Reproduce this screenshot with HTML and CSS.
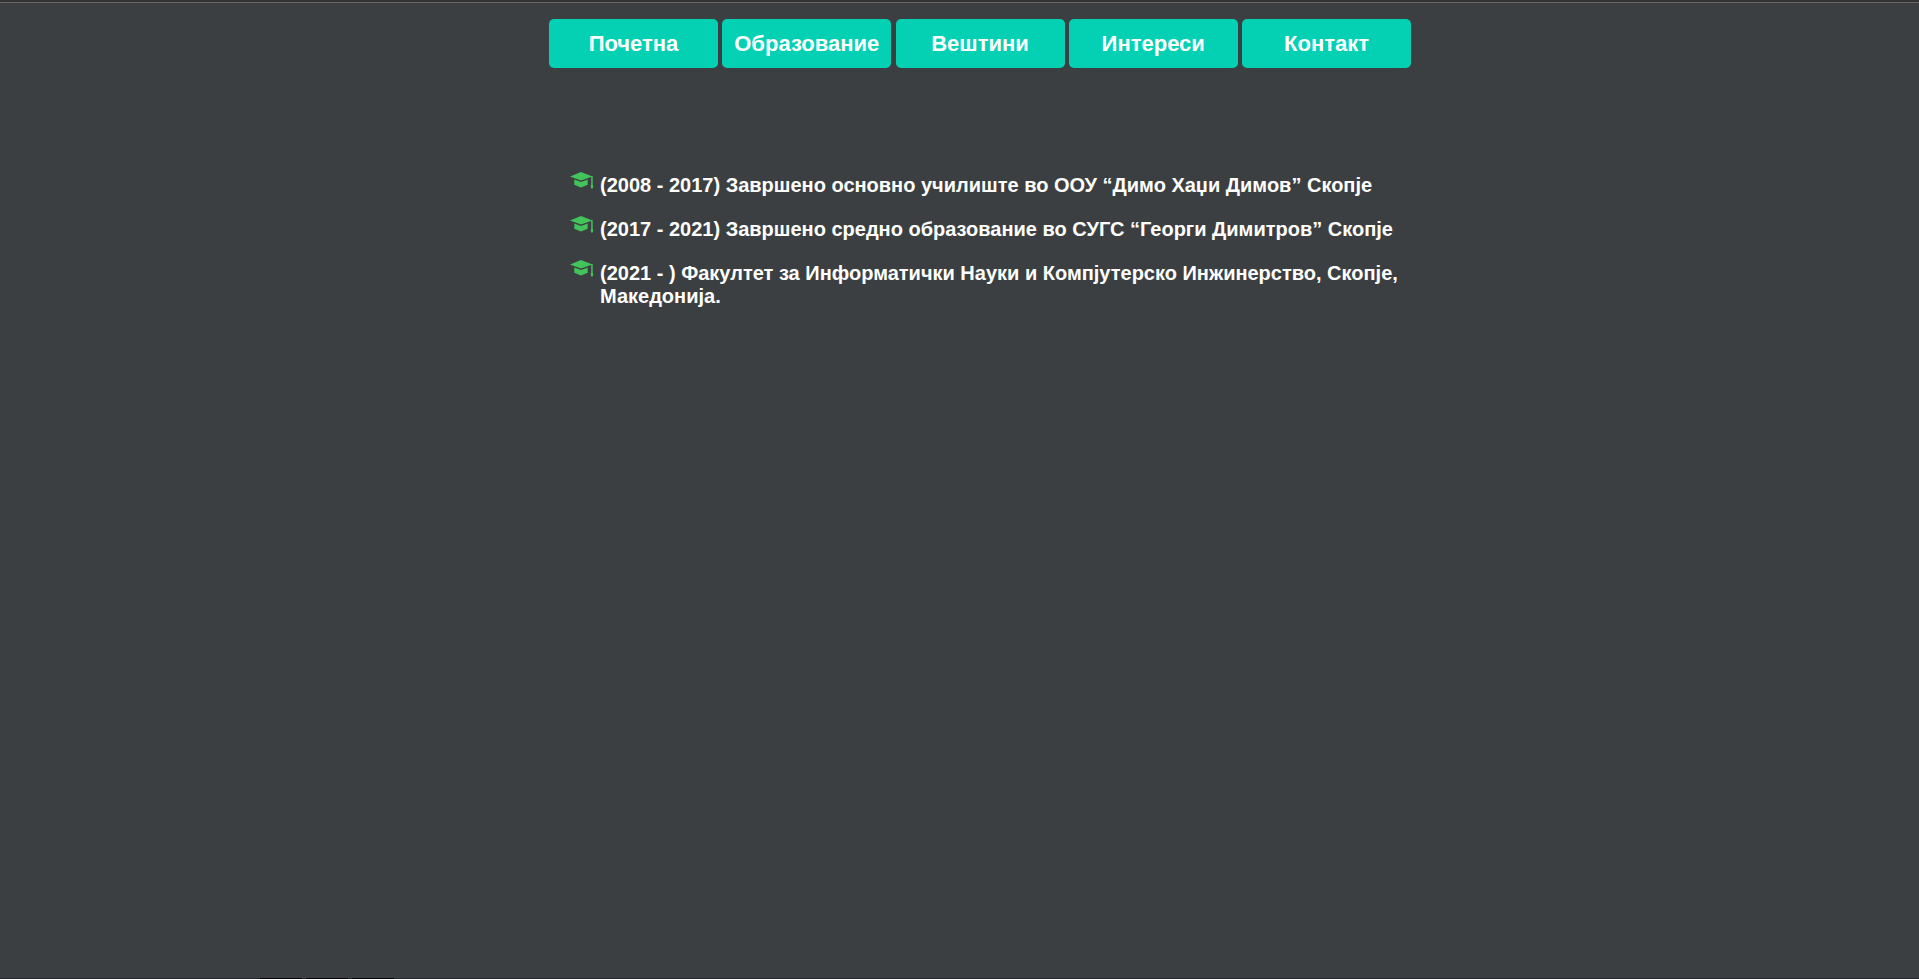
FILE: index.html
```html
<!DOCTYPE html>
<html lang="mk">
<head>
  <meta charset="utf-8">
  <meta name="viewport" content="width=device-width, initial-scale=1">
  <title>Образование</title>
  <link rel="stylesheet" href="styles.css">
</head>
<body>
  <svg class="sprite" aria-hidden="true">
    <symbol id="cap" viewBox="0 0 24 18">
      <path d="M0 4.400 11 0 22.500 4.400 11 8.400z"/>
      <path d="M4.300 7.400 11 10l6.700-2.600v5.300L11 15.400 4.300 12.700z"/>
      <path d="M21.200 4.200h1.500v8.300l.6 2.500-1.300 2.200-1.400-2.200.6-2.500z"/>
    </symbol>
  </svg>
  <nav>
    <ul class="menu">
      <li><a class="menu-link" href="#home">Почетна</a></li>
      <li><a class="menu-link" href="#education">Образование</a></li>
      <li><a class="menu-link" href="#skills">Вештини</a></li>
      <li><a class="menu-link" href="#interests">Интереси</a></li>
      <li><a class="menu-link" href="#contact">Контакт</a></li>
    </ul>
  </nav>
  <main class="content">
    <ul class="schools">
      <li class="school"><svg class="cap" aria-hidden="true"><use href="#cap"/></svg><span class="school-text">(2008 - 2017) Завршено основно училиште во ООУ “Димо Хаџи Димов” Скопје</span></li>
      <li class="school"><svg class="cap" aria-hidden="true"><use href="#cap"/></svg><span class="school-text">(2017 - 2021) Завршено средно образование во СУГС “Георги Димитров” Скопје</span></li>
      <li class="school"><svg class="cap" aria-hidden="true"><use href="#cap"/></svg><span class="school-text">(2021 - ) Факултет за Информатички Науки и Компјутерско Инжинерство, Скопје, Македонија.</span></li>
    </ul>
  </main>
  <footer class="edge"><i class="dash"></i><i class="dash"></i><i class="dash"></i></footer>
</body>
</html>
```
FILE: styles.css
```css
* {
  box-sizing: border-box;
}

body {
  display: flex;
  flex-direction: column;
  min-height: 100vh;
  margin: 0;
  border-top: 2px solid #333333;
  background: #3c3f41;
  color: #ffffff;
  font-family: "Liberation Sans", Arial, sans-serif;
  font-weight: bold;
}

ul {
  margin: 0;
  padding: 0;
  list-style: none;
}

.sprite {
  display: none;
}

nav {
  padding: 16px 0 0 41px;
  border-top: 1px solid #666666;
}

.menu {
  display: flex;
  flex-wrap: wrap;
  justify-content: space-between;
  gap: 4px;
  max-width: 862px;
  margin: 0 auto;
}

.menu-link {
  display: block;
  width: 169px;
  padding: 12px 0;
  border-radius: 5px;
  background: #04d1b3;
  color: #ffffff;
  font-size: 22px;
  line-height: 25px;
  text-align: center;
  text-decoration: none;
}

.content {
  width: 100%;
  max-width: 901px;
  margin: 0 auto;
  padding: 104px 0 0 61px;
}

.schools {
  display: grid;
  gap: 19px;
}

.school {
  display: flex;
  gap: 6px;
  font-size: 20px;
  line-height: 23px;
}

.school-text {
  padding-top: 2px;
}

.cap {
  flex: none;
  width: 24px;
  height: 18px;
  fill: #41c45a;
}

.edge {
  display: flex;
  gap: 4px;
  height: 1px;
  margin-top: auto;
  padding-left: 260px;
  background: #25282d;
}

.dash {
  width: 42px;
  background: #050208;
}
```
